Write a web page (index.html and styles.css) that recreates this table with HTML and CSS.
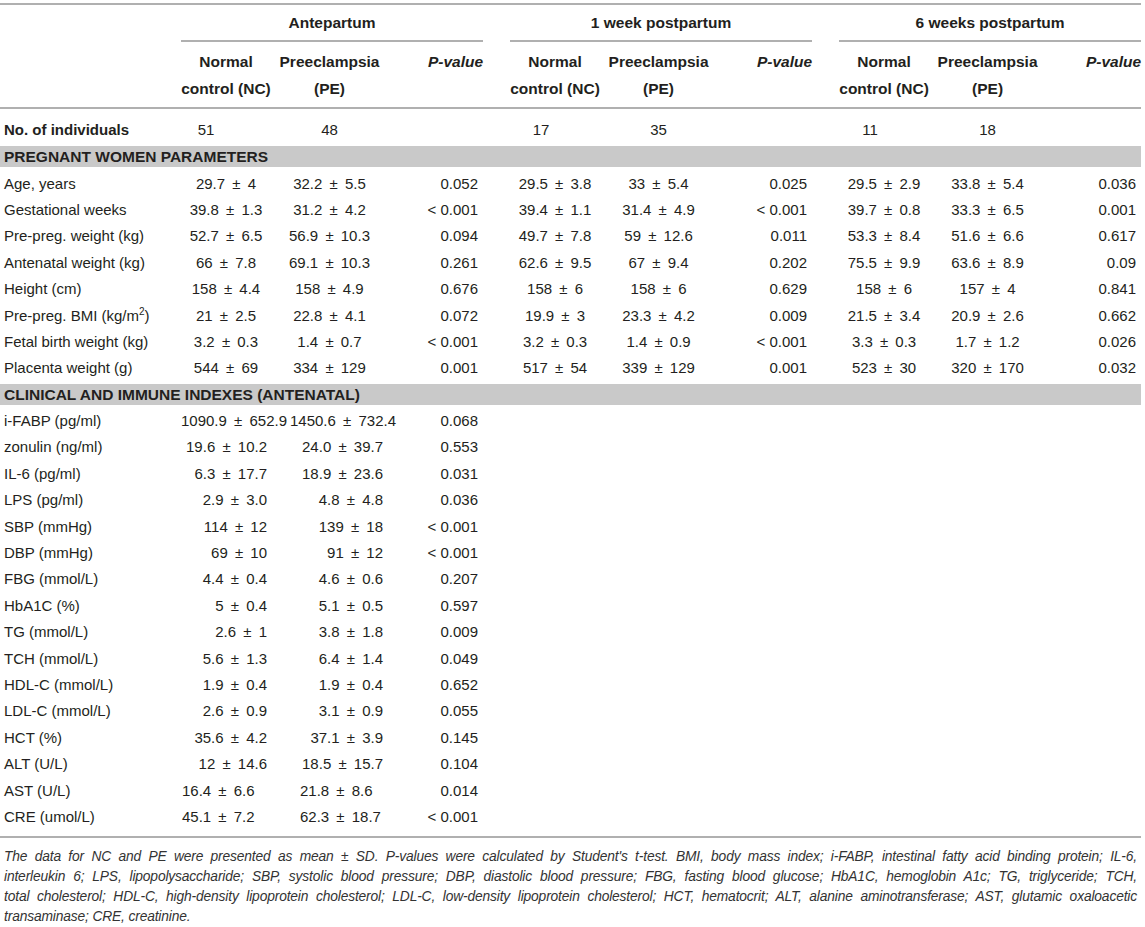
FILE: index.html
```html
<!DOCTYPE html>
<html>
<head>
<meta charset="utf-8">
<title>Clinical characteristics of pregnant women</title>
<link rel="stylesheet" href="styles.css">
</head>
<body>
<div class="table-wrap">
<table class="stats">
  <colgroup>
    <col class="c-label">
    <col class="c-nc"><col class="c-pe"><col class="c-pv">
    <col class="c-gap">
    <col class="c-nc"><col class="c-pe"><col class="c-pv">
    <col class="c-gap">
    <col class="c-nc"><col class="c-pe"><col class="c-pv">
  </colgroup>
  <thead>
    <tr class="groups">
      <th></th>
      <th class="grp" colspan="3">Antepartum</th>
      <th></th>
      <th class="grp" colspan="3">1 week postpartum</th>
      <th></th>
      <th class="grp" colspan="3">6 weeks postpartum</th>
    </tr>
    <tr class="subs">
      <th></th>
      <th>Normal<br>control (NC)</th><th>Preeclampsia<br>(PE)</th><th class="pv">P-value</th>
      <th></th>
      <th>Normal<br>control (NC)</th><th>Preeclampsia<br>(PE)</th><th class="pv">P-value</th>
      <th></th>
      <th>Normal<br>control (NC)</th><th>Preeclampsia<br>(PE)</th><th class="pv">P-value</th>
    </tr>
  </thead>
  <tbody>
    <tr class="count">
      <th class="label">No. of individuals</th>
      <td class="nc first">51</td><td>48</td><td></td>
      <td></td>
      <td class="nc">17</td><td>35</td><td></td>
      <td></td>
      <td class="nc">11</td><td>18</td><td></td>
    </tr>
    <tr class="band"><th colspan="12">Pregnant women parameters</th></tr>
    <tr>
      <th class="label">Age, years</th>
      <td>29.7 ± 4</td><td>32.2 ± 5.5</td><td class="p">0.052</td><td></td>
      <td>29.5 ± 3.8</td><td>33 ± 5.4</td><td class="p">0.025</td><td></td>
      <td>29.5 ± 2.9</td><td>33.8 ± 5.4</td><td class="p">0.036</td>
    </tr>
    <tr>
      <th class="label">Gestational weeks</th>
      <td>39.8 ± 1.3</td><td>31.2 ± 4.2</td><td class="p">&lt; 0.001</td><td></td>
      <td>39.4 ± 1.1</td><td>31.4 ± 4.9</td><td class="p">&lt; 0.001</td><td></td>
      <td>39.7 ± 0.8</td><td>33.3 ± 6.5</td><td class="p">0.001</td>
    </tr>
    <tr>
      <th class="label">Pre-preg. weight (kg)</th>
      <td>52.7 ± 6.5</td><td>56.9 ± 10.3</td><td class="p">0.094</td><td></td>
      <td>49.7 ± 7.8</td><td>59 ± 12.6</td><td class="p">0.011</td><td></td>
      <td>53.3 ± 8.4</td><td>51.6 ± 6.6</td><td class="p">0.617</td>
    </tr>
    <tr>
      <th class="label">Antenatal weight (kg)</th>
      <td>66 ± 7.8</td><td>69.1 ± 10.3</td><td class="p">0.261</td><td></td>
      <td>62.6 ± 9.5</td><td>67 ± 9.4</td><td class="p">0.202</td><td></td>
      <td>75.5 ± 9.9</td><td>63.6 ± 8.9</td><td class="p">0.09</td>
    </tr>
    <tr>
      <th class="label">Height (cm)</th>
      <td>158 ± 4.4</td><td>158 ± 4.9</td><td class="p">0.676</td><td></td>
      <td>158 ± 6</td><td>158 ± 6</td><td class="p">0.629</td><td></td>
      <td>158 ± 6</td><td>157 ± 4</td><td class="p">0.841</td>
    </tr>
    <tr>
      <th class="label">Pre-preg. BMI (kg/m<sup>2</sup>)</th>
      <td>21 ± 2.5</td><td>22.8 ± 4.1</td><td class="p">0.072</td><td></td>
      <td>19.9 ± 3</td><td>23.3 ± 4.2</td><td class="p">0.009</td><td></td>
      <td>21.5 ± 3.4</td><td>20.9 ± 2.6</td><td class="p">0.662</td>
    </tr>
    <tr>
      <th class="label">Fetal birth weight (kg)</th>
      <td>3.2 ± 0.3</td><td>1.4 ± 0.7</td><td class="p">&lt; 0.001</td><td></td>
      <td>3.2 ± 0.3</td><td>1.4 ± 0.9</td><td class="p">&lt; 0.001</td><td></td>
      <td>3.3 ± 0.3</td><td>1.7 ± 1.2</td><td class="p">0.026</td>
    </tr>
    <tr>
      <th class="label">Placenta weight (g)</th>
      <td>544 ± 69</td><td>334 ± 129</td><td class="p">0.001</td><td></td>
      <td>517 ± 54</td><td>339 ± 129</td><td class="p">0.001</td><td></td>
      <td>523 ± 30</td><td>320 ± 170</td><td class="p">0.032</td>
    </tr>
    <tr class="band"><th colspan="12">Clinical and immune indexes (antenatal)</th></tr>
  </tbody>
  <tbody class="clinical">
    <tr class="mid"><th class="label">i-FABP (pg/ml)</th><td>1090.9 ± 652.9</td><td>1450.6 ± 732.4</td><td class="p">0.068</td><td colspan="8"></td></tr>
    <tr><th class="label">zonulin (ng/ml)</th><td>19.6 ± 10.2</td><td>24.0 ± 39.7</td><td class="p">0.553</td><td colspan="8"></td></tr>
    <tr><th class="label">IL-6 (pg/ml)</th><td>6.3 ± 17.7</td><td>18.9 ± 23.6</td><td class="p">0.031</td><td colspan="8"></td></tr>
    <tr><th class="label">LPS (pg/ml)</th><td>2.9 ± 3.0</td><td>4.8 ± 4.8</td><td class="p">0.036</td><td colspan="8"></td></tr>
    <tr><th class="label">SBP (mmHg)</th><td>114 ± 12</td><td>139 ± 18</td><td class="p">&lt; 0.001</td><td colspan="8"></td></tr>
    <tr><th class="label">DBP (mmHg)</th><td>69 ± 10</td><td>91 ± 12</td><td class="p">&lt; 0.001</td><td colspan="8"></td></tr>
    <tr><th class="label">FBG (mmol/L)</th><td>4.4 ± 0.4</td><td>4.6 ± 0.6</td><td class="p">0.207</td><td colspan="8"></td></tr>
    <tr><th class="label">HbA1C (%)</th><td>5 ± 0.4</td><td>5.1 ± 0.5</td><td class="p">0.597</td><td colspan="8"></td></tr>
    <tr><th class="label">TG (mmol/L)</th><td>2.6 ± 1</td><td>3.8 ± 1.8</td><td class="p">0.009</td><td colspan="8"></td></tr>
    <tr><th class="label">TCH (mmol/L)</th><td>5.6 ± 1.3</td><td>6.4 ± 1.4</td><td class="p">0.049</td><td colspan="8"></td></tr>
    <tr><th class="label">HDL-C (mmol/L)</th><td>1.9 ± 0.4</td><td>1.9 ± 0.4</td><td class="p">0.652</td><td colspan="8"></td></tr>
    <tr><th class="label">LDL-C (mmol/L)</th><td>2.6 ± 0.9</td><td>3.1 ± 0.9</td><td class="p">0.055</td><td colspan="8"></td></tr>
    <tr><th class="label">HCT (%)</th><td>35.6 ± 4.2</td><td>37.1 ± 3.9</td><td class="p">0.145</td><td colspan="8"></td></tr>
    <tr><th class="label">ALT (U/L)</th><td>12 ± 14.6</td><td>18.5 ± 15.7</td><td class="p">0.104</td><td colspan="8"></td></tr>
    <tr class="left"><th class="label">AST (U/L)</th><td>16.4 ± 6.6</td><td>21.8 ± 8.6</td><td class="p">0.014</td><td colspan="8"></td></tr>
    <tr class="left"><th class="label">CRE (umol/L)</th><td>45.1 ± 7.2</td><td>62.3 ± 18.7</td><td class="p">&lt; 0.001</td><td colspan="8"></td></tr>
  </tbody>
</table>
</div>
<p class="note">
  <span>The data for NC and PE were presented as mean ± SD. P-values were calculated by Student's t-test. BMI, body mass index; i-FABP, intestinal fatty acid binding protein; IL-6,</span>
  <span>interleukin 6; LPS, lipopolysaccharide; SBP, systolic blood pressure; DBP, diastolic blood pressure; FBG, fasting blood glucose; HbA1C, hemoglobin A1c; TG, triglyceride; TCH,</span>
  <span>total cholesterol; HDL-C, high-density lipoprotein cholesterol; LDL-C, low-density lipoprotein cholesterol; HCT, hematocrit; ALT, alanine aminotransferase; AST, glutamic oxaloacetic</span>
  <span class="last">transaminase; CRE, creatinine.</span>
</p>
</body>
</html>
```

FILE: styles.css
```css
body {
    margin: 0;
    background: #fff;
    color: #231f20;
    font-family: "Liberation Sans", Arial, Helvetica, sans-serif;
    font-size: 15px;
}

.table-wrap {
    width: 1141px;
    margin-top: 3px;
    padding-bottom: 6px;
    border-top: 2px solid #b0b0b0;
    border-bottom: 2px solid #b0b0b0;
}

.stats {
    width: 100%;
    border-collapse: collapse;
    table-layout: fixed;
}
.stats th,
.stats td {
    padding: 0;
    line-height: 20px;
    white-space: nowrap;
    text-align: center;
}
.stats td {
    word-spacing: 3px;
}
.stats th {
    font-size: 15.5px;
}
.c-label { width: 181px; }
.c-nc { width: 90px; }
.c-pe { width: 117px; }
.c-pv { width: 95px; }
.c-gap { width: 27px; }

/* header */
.groups {
    height: 36px;
}
.groups .grp {
    border-bottom: 2px solid #b0b0b0;
}
.subs {
    height: 67px;
}
.subs th {
    vertical-align: top;
    padding-top: 6px;
    line-height: 27px;
    border-bottom: 2px solid #b0b0b0;
}
.subs .pv {
    text-align: right;
    font-style: italic;
}

/* body rows */
.stats tbody tr {
    height: 26.4px;
}
.stats .label {
    text-align: left;
    font-weight: normal;
    font-size: 15px;
    padding-left: 4px;
}
.stats .p {
    text-align: right;
    padding-right: 5px;
    word-spacing: 0;
}
.label sup {
    font-size: 10px;
    line-height: 0;
}

.stats .count {
    height: 36px;
}
.count th,
.count td {
    vertical-align: top;
    padding-top: 11px;
}
.count .label {
    font-weight: bold;
}
.count .nc {
    padding-right: 28px;
}
.count .first {
    padding-right: 40px;
}

.band th {
    text-align: left;
    padding-left: 4px;
    font-weight: bold;
    text-transform: uppercase;
    background: linear-gradient(#fff 2px, #c9c9c9 2px, #c9c9c9 calc(100% - 3px), #fff calc(100% - 3px));
}

/* clinical section: values sit on the right of their column */
.clinical td {
    text-align: right;
    padding-right: 4px;
}
.clinical td + td {
    padding-right: 5px;
}
.clinical td.p {
    padding-right: 5px;
}
.clinical .mid td:first-of-type {
    text-align: center;
    padding-right: 0;
}
.clinical .mid td:nth-of-type(2) {
    text-align: left;
    padding-left: 19px;
}
.clinical .left td {
    text-align: left;
    padding-left: 1px;
}
.clinical .left td + td {
    padding-left: 29px;
}
.clinical .mid td.p,
.clinical .left td.p {
    text-align: right;
    padding-right: 5px;
}

/* footnote */
.note {
    width: 1133px;
    margin: 9px 0 0;
    padding: 0 4px;
    font-size: 13.8px;
    letter-spacing: -0.15px;
    font-style: italic;
    line-height: 20px;
    color: #333;
}
.note span {
    display: block;
    text-align: justify;
    text-align-last: justify;
}
.note .last {
    text-align-last: left;
}
```
